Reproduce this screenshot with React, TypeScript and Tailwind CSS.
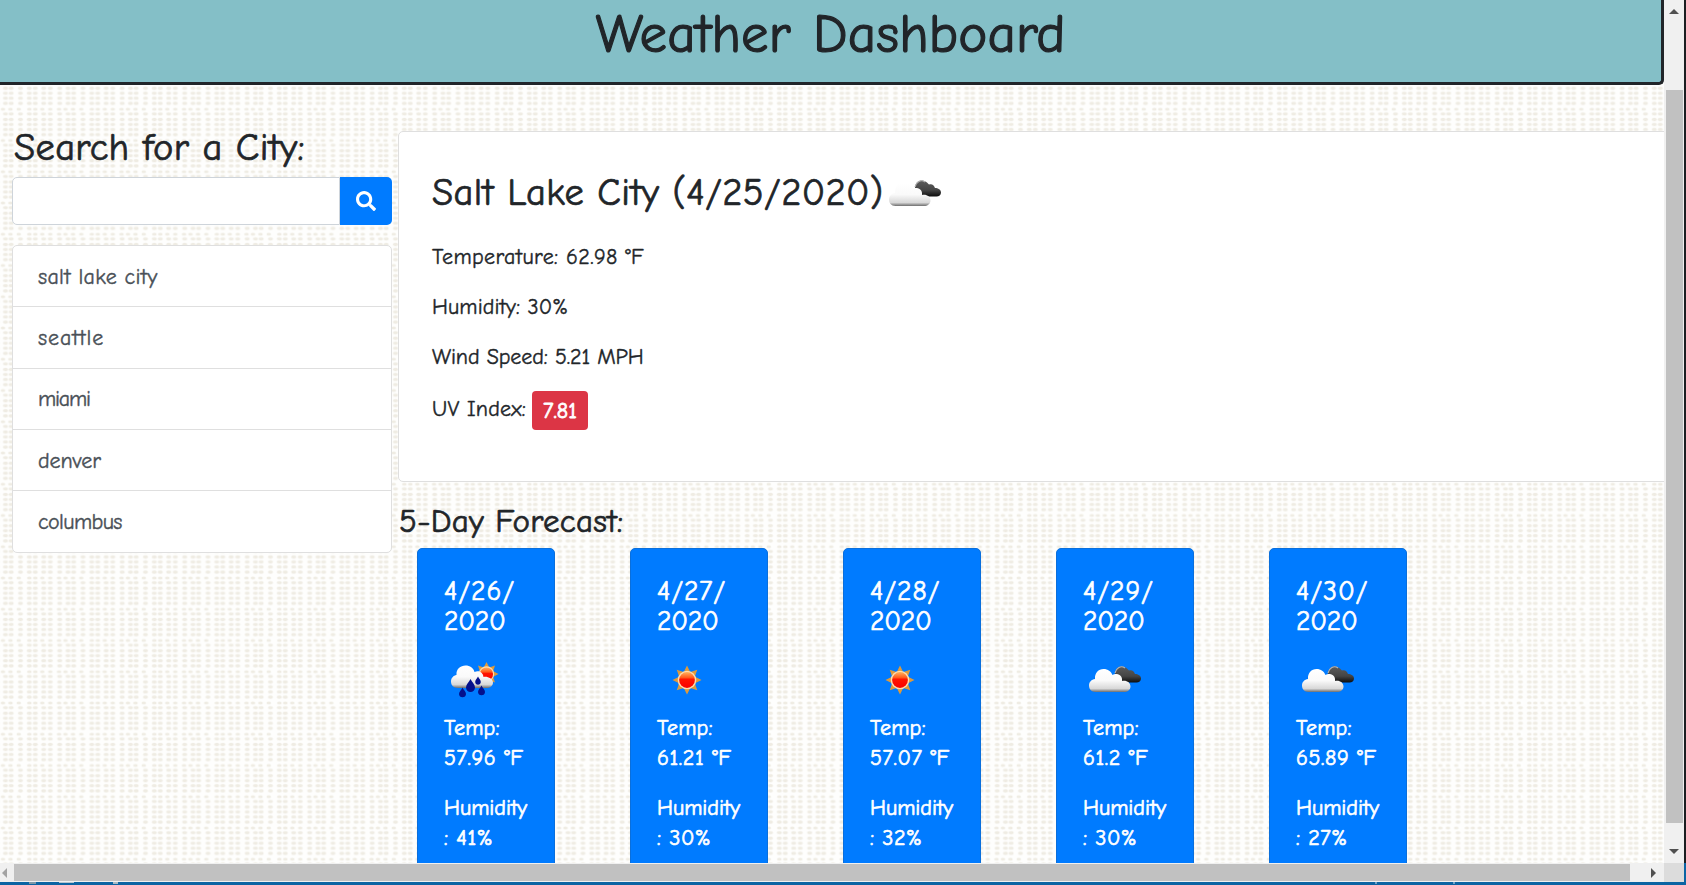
import React from 'react';

const cities = [
  { name: 'salt lake city', spacing: 'tracking-[0.3px]' },
  { name: 'seattle', spacing: 'tracking-[0.9px]' },
  { name: 'miami', spacing: 'tracking-[-1.2px]' },
  { name: 'denver', spacing: 'tracking-[-0.1px]' },
  { name: 'columbus', spacing: 'tracking-[-0.6px]' },
];

const days = [
  { day: '4/26/', year: '2020', icon: 'rain', temp: '57.96 °F', humidity: '41%' },
  { day: '4/27/', year: '2020', icon: 'sun', temp: '61.21 °F', humidity: '30%' },
  { day: '4/28/', year: '2020', icon: 'sun', temp: '57.07 °F', humidity: '32%' },
  { day: '4/29/', year: '2020', icon: 'cloud', temp: '61.2 °F', humidity: '30%' },
  { day: '4/30/', year: '2020', icon: 'cloud', temp: '65.89 °F', humidity: '27%' },
];

const columns = [4.3, 10.3, 18.7, 25.3, 34.7, 43, 48.7, 58];
const rows = [4.7, 10.2, 15.2, 20.2, 25.4];
const accents = [4.3, 10.3, 17.3, 25.3, 34, 40.5, 48, 56.3];

function Weave() {
  return (
    <svg className="absolute inset-0 h-full w-full" aria-hidden="true">
      <defs>
        <pattern id="weave" x="25" y="15.5" width="62.5" height="31.25" patternUnits="userSpaceOnUse">
          <g fill="#ece8de" fillOpacity="0.3">
            {rows.map((y) =>
              columns.map((x) => <ellipse key={`${x}-${y}`} cx={x} cy={y} rx="2.9" ry="2" />),
            )}
            {accents.map((x) => (
              <ellipse key={x} cx={x} cy="0" rx="2.7" ry="1.8" />
            ))}
            {accents.map((x) => (
              <ellipse key={x} cx={x} cy="31.25" rx="2.7" ry="1.8" />
            ))}
          </g>
          <g fill="#ebe7dc" fillOpacity="0.75">
            {rows.map((y) =>
              columns.map((x) => <ellipse key={`${x}-${y}`} cx={x} cy={y} rx="2.2" ry="1.4" />),
            )}
            {accents.map((x) => (
              <ellipse key={x} cx={x} cy="0" rx="2" ry="1.3" />
            ))}
            {accents.map((x) => (
              <ellipse key={x} cx={x} cy="31.25" rx="2" ry="1.3" />
            ))}
          </g>
        </pattern>
      </defs>
      <rect width="100%" height="100%" fill="#fefefd" />
      <rect width="100%" height="100%" fill="url(#weave)" />
    </svg>
  );
}

function IconDefs() {
  return (
    <svg className="absolute h-0 w-0" aria-hidden="true">
      <defs>
        <linearGradient id="white" x1="0" y1="0" x2="0" y2="1">
          <stop offset="0" stopColor="#ffffff" />
          <stop offset="0.5" stopColor="#fafafa" />
          <stop offset="0.85" stopColor="#d8d8d8" />
          <stop offset="1" stopColor="#6e6e6e" />
        </linearGradient>
        <linearGradient id="dark" x1="0" y1="0" x2="0" y2="1">
          <stop offset="0" stopColor="#5c5c5c" />
          <stop offset="0.6" stopColor="#444444" />
          <stop offset="1" stopColor="#0c0c0c" />
        </linearGradient>
        <linearGradient id="core" x1="0" y1="0" x2="0" y2="1">
          <stop offset="0" stopColor="#ffb25c" />
          <stop offset="0.35" stopColor="#ff5a1c" />
          <stop offset="0.45" stopColor="#ff1400" />
          <stop offset="1" stopColor="#fa0000" />
        </linearGradient>
      </defs>
    </svg>
  );
}

function Clouds({ className }: { className: string }) {
  return (
    <svg viewBox="0 0 54 28" className={className}>
      <path d="M27 9C27 3 32 0.600 36 2C39 3 40 4.500 41 5.500C44 4.600 46 6 47 9C50 9 53 10.500 53 13.500C53 16 51 17.600 48.500 17.600H32Z" fill="url(#dark)" />
      <path d="M27 8C28 3 33 0 37 3" fill="none" stroke="#b4b4b4" strokeWidth="1.200" />
      <path d="M7.500 27C3 27 1 24 1 20.500C1 17 3.500 14.500 7 14C6.500 8 10.500 4 15.500 4C20 4 23 6.500 24.500 10C26 8.800 28 8.600 30 9.300C33 10.200 34.500 13 34 16C38.500 15 42.500 17.500 42.500 21.500C42.500 25 39.500 27 36 27Z" fill="url(#white)" />
    </svg>
  );
}

function SunShape() {
  return (
    <g>
      {[0, 45, 90, 135, 180, 225, 270, 315].map((a) => (
        <path key={a} d="M-3.200 -8L0 -14.500L3.200 -8Z" fill="#dd9a3c" transform={`rotate(${a})`} />
      ))}
      <circle r="9.300" fill="#ffdcae" />
      <circle r="7.900" fill="url(#core)" />
    </g>
  );
}

function Sun({ className }: { className: string }) {
  return (
    <svg viewBox="-15 -15 30 30" className={className}>
      <SunShape />
    </svg>
  );
}

function Rain({ className }: { className: string }) {
  return (
    <svg viewBox="0 0 50 36" className={className}>
      <g transform="translate(36.500 12) scale(0.830)">
        <SunShape />
      </g>
      <path d="M8 26C3 26 1 23 1 19.500C1 16 3.500 13.500 6.500 13C6 7 10.500 3.500 15.500 3.500C20 3.500 23.500 6 24.500 10C29 8 33 10.500 33.500 15C37 14 43 16.500 43 20.500C43 24 40 26 36.500 26Z" fill="url(#white)" />
      <g fill="#04108c">
        <path d="M20.500 17C22 20 25 22.500 25 25.500C25 28 23 30 20.500 30C18 30 16 28 16 25.500C16 22.500 19 20 20.500 17Z" />
        <path d="M12.500 25.500C13.500 28 16 29.500 16 32C16 34 14.500 35.300 12.500 35.300C10.500 35.300 9 34 9 32C9 29.500 11.500 28 12.500 25.500Z" />
        <path d="M31.500 23.500C32.500 26 35 27.500 35 30C35 32 33.500 33.300 31.500 33.300C29.500 33.300 28 32 28 30C28 27.500 30.500 26 31.500 23.500Z" />
        <path d="M28 14.500C29 16.500 30.800 18 30.800 20C30.800 21.600 29.600 22.700 28 22.700C26.400 22.700 25.200 21.600 25.200 20C25.200 18 27 16.500 28 14.500Z" />
      </g>
    </svg>
  );
}

function DayCard({ d }: { d: (typeof days)[number] }) {
  return (
    <article className="h-[340px] w-[138px] shrink-0 rounded-[5px] border border-[#0a6fdc] bg-[#007bff] pl-[26px] text-[22px] leading-[30px] whitespace-nowrap text-white [-webkit-text-stroke:0.7px_white]">
      <h5 className="pt-[27px] text-[27.5px] leading-[30px]">
        <span className="block tracking-[0.9px]">{d.day}</span>
        <span className="block tracking-[-0.2px]">{d.year}</span>
      </h5>
      <div className="flex h-[80px] items-center pt-[8px]">
        {d.icon === 'rain' && <Rain className="ml-[6px] h-9 w-[50px]" />}
        {d.icon === 'sun' && <Sun className="ml-[15px] h-[30px] w-[30px]" />}
        {d.icon === 'cloud' && <Clouds className="-mt-[3px] ml-[5px] h-7 w-[54px]" />}
      </div>
      <p className="mt-[-3px]">
        <span className="block tracking-[0.2px]">Temp:</span>
        <span className="block tracking-[0.6px]">{d.temp}</span>
      </p>
      <p className="mt-5">
        <span className="block">Humidity</span>
        <span className="block tracking-[0.5px]">: {d.humidity}</span>
      </p>
    </article>
  );
}

export default function App() {
  return (
    <div className="flex h-[885px] w-[1686px] flex-col overflow-hidden bg-[#0b64a3] font-['Comic_Neue','Comic_Sans_MS',cursive] text-[#212529] [font-variant-ligatures:none]">
      <IconDefs />
      <div className="flex h-[863px] shrink-0">
        <div className="relative w-[1664px] shrink-0 overflow-hidden">
          <Weave />
          <div className="relative flex h-full flex-col">
            <header className="h-[85px] shrink-0 rounded-br-[5px] border-r-[3px] border-b-[3px] border-[#212529] bg-[#84bfc7] text-center">
              <h1 className="pt-[4px] text-[55px] leading-[60px] tracking-[0.1px] [word-spacing:4px] [-webkit-text-stroke:1.2px_#212529]">Weather Dashboard</h1>
            </header>
            <div className="flex min-h-0 flex-1">
              <aside className="ml-3 w-[380px] shrink-0 pt-[42px]">
                <h3 className="h-[50px] pl-[2px] text-[38.5px] leading-[42px] tracking-[0.3px] whitespace-nowrap [-webkit-text-stroke:0.7px_#212529]">Search for a City:</h3>
                <div className="flex h-12">
                  <input aria-label="City" className="w-[328px] min-w-0 rounded-l-[5px] border border-[#ced4da] bg-white px-4 outline-none" />
                  <button aria-label="Search" className="flex w-[52px] items-center justify-center rounded-r-[5px] bg-[#007bff]">
                    <svg viewBox="0 0 512 512" className="h-5 w-5" fill="white">
                      <path d="M505 442.700L405.300 343c-4.500-4.500-10.600-7-17-7H372c27.600-35.300 44-79.700 44-128C416 93.100 322.900 0 208 0S0 93.100 0 208s93.100 208 208 208c48.300 0 92.700-16.400 128-44v16.300c0 6.400 2.500 12.500 7 17l99.700 99.700c9.400 9.400 24.600 9.400 33.900 0l28.300-28.300c9.400-9.400 9.400-24.600.1-34zM208 336c-70.700 0-128-57.200-128-128 0-70.700 57.200-128 128-128 70.700 0 128 57.200 128 128 0 70.700-57.200 128-128 128z" />
                    </svg>
                  </button>
                </div>
                <ul className="mt-5 overflow-hidden rounded-[5px] border border-[#dfdfdf] bg-white">
                  {cities.map((c) => (
                    <li key={c.name} className="flex h-[61.3px] items-center border-b border-[#dfdfdf] pt-[2px] pl-[25px] text-[22px] text-[#495057] last:h-[60.5px] last:border-b-0 [-webkit-text-stroke:0.4px_#495057]">
                      <span className={c.spacing}>{c.name}</span>
                    </li>
                  ))}
                </ul>
              </aside>
              <main className="ml-[6px] flex min-w-0 flex-1 flex-col pt-[46px]">
                <section className="h-[351px] w-[1280px] shrink-0 rounded-[5px] border border-[#dfdfdf] bg-white pl-[33px] text-[22px] leading-[30px] [-webkit-text-stroke:0.4px_#212529]">
                  <div className="mt-[40px] flex h-[42px] items-center">
                    <h3 className="text-[38.5px] leading-[42px] tracking-[0.35px] [-webkit-text-stroke:0.7px_#212529]">Salt Lake City (4/25/2020)</h3>
                    <Clouds className="ml-[5px] h-7 w-[54px]" />
                  </div>
                  <p className="mt-[28px] tracking-[0.35px]">Temperature: 62.98 °F</p>
                  <p className="mt-5 tracking-[0.1px]">Humidity: 30%</p>
                  <p className="mt-5 tracking-[-0.1px]">Wind Speed: 5.21 MPH</p>
                  <p className="mt-[19px] flex">
                    <span className="pt-[3px] tracking-[0.2px]">UV Index:</span>
                    <span className="ml-[6px] flex h-[39px] w-14 items-center justify-center rounded-[4px] bg-[#dc3545] text-white [-webkit-text-stroke:0.8px_white]">7.81</span>
                  </p>
                </section>
                <h4 className="mt-[21px] h-[45px] shrink-0 pl-[1px] text-[33px] leading-[36px] tracking-[0.25px] [-webkit-text-stroke:0.7px_#212529]">5-Day Forecast:</h4>
                <div className="flex gap-[75px] pl-[19px]">
                  {days.map((d) => (
                    <DayCard key={d.day} d={d} />
                  ))}
                </div>
              </main>
            </div>
          </div>
        </div>
        <div className="flex w-5 shrink-0 flex-col items-center bg-[#f0f0f0]">
          <div className="flex h-[90px] items-start pt-[9px]">
            <svg viewBox="0 0 10 5" className="h-[5px] w-[10px]"><path d="M0 5L5 0L10 5Z" fill="#505050" /></svg>
          </div>
          <div className="h-[733px] w-[17px] bg-[#c1c1c1]" />
          <div className="flex flex-1 items-end pb-[9px]">
            <svg viewBox="0 0 10 5" className="h-[5px] w-[10px]"><path d="M0 0L5 5L10 0Z" fill="#505050" /></svg>
          </div>
        </div>
        <div className="w-[2px] bg-[#1c1f22]" />
      </div>
      <div className="flex h-[19px] w-[1684px] shrink-0 items-center bg-[#f0f0f0]">
        <div className="flex w-[14px] justify-center pr-[6px]">
          <svg viewBox="0 0 5 10" className="h-[10px] w-[5px]"><path d="M5 0L0 5L5 10Z" fill="#a3a3a3" /></svg>
        </div>
        <div className="h-[17px] w-[1616px] bg-[#c1c1c1]" />
        <div className="flex w-[34px] items-center pl-[21px]">
          <svg viewBox="0 0 5 10" className="h-[10px] w-[5px]"><path d="M0 0L5 5L0 10Z" fill="#505050" /></svg>
        </div>
        <div className="h-full w-5 bg-[#dcdcdc]" />
      </div>
      <div className="flex h-[3px] w-full items-start">
        <span className="ml-[29px] h-[2px] w-[7px] bg-[#7d98a8]" />
        <span className="ml-[23px] h-[1px] w-[15px] bg-[#b4c4cf]" />
        <span className="ml-[39px] h-[2px] w-[5px] bg-[#a9bac4]" />
        <span className="ml-[1257px] h-[2px] w-[2px] bg-[#6fa3c8]" />
        <span className="ml-[76px] h-[2px] w-[2px] bg-[#6fa3c8]" />
      </div>
    </div>
  );
}
